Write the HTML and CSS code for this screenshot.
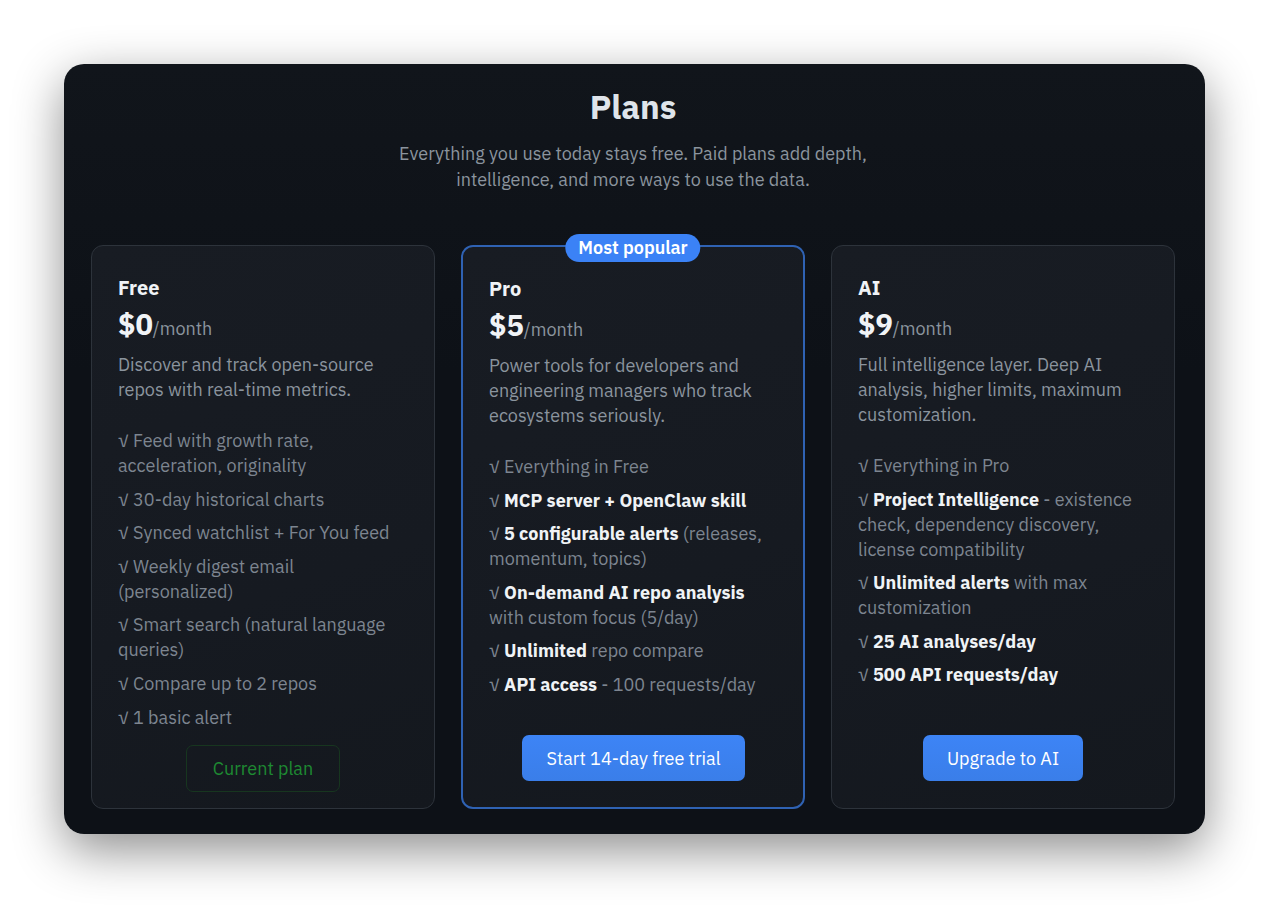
FILE: index.html
```html
<!DOCTYPE html>
<html lang="en">
<head>
    <meta charset="UTF-8">
    <meta name="viewport" content="width=device-width, initial-scale=1.0">
    <title>Plans</title>
    <link rel="stylesheet" href="styles.css">
</head>
<body>
    <div class="plans">
        <h1 class="plans-title">Plans</h1>
        <p class="plans-sub">Everything you use today stays free. Paid plans add depth,<br>intelligence, and more ways to use the data.</p>

        <div class="cards">
            <div class="card">
                <div class="card-name">Free</div>
                <div class="price"><span class="amount">$0</span>/month</div>
                <p class="desc">Discover and track open-source repos with real-time metrics.</p>
                <ul class="features">
                    <li>√ Feed with growth rate, acceleration, originality</li>
                    <li>√ 30-day historical charts</li>
                    <li>√ Synced watchlist + For You feed</li>
                    <li>√ Weekly digest email (personalized)</li>
                    <li>√ Smart search (natural language queries)</li>
                    <li>√ Compare up to 2 repos</li>
                    <li>√ 1 basic alert</li>
                </ul>
                <button class="btn current">Current plan</button>
            </div>

            <div class="card popular">
                <span class="badge">Most popular</span>
                <div class="card-name">Pro</div>
                <div class="price"><span class="amount">$5</span>/month</div>
                <p class="desc">Power tools for developers and engineering managers who track ecosystems seriously.</p>
                <ul class="features">
                    <li>√ Everything in Free</li>
                    <li>√ <b>MCP server + OpenClaw skill</b></li>
                    <li>√ <b>5 configurable alerts</b> (releases, momentum, topics)</li>
                    <li>√ <b>On-demand AI repo analysis</b> with custom focus (5/day)</li>
                    <li>√ <b>Unlimited</b> repo compare</li>
                    <li>√ <b>API access</b> - 100 requests/day</li>
                </ul>
                <button class="btn primary">Start 14-day free trial</button>
            </div>

            <div class="card">
                <div class="card-name">AI</div>
                <div class="price"><span class="amount">$9</span>/month</div>
                <p class="desc">Full intelligence layer. Deep AI analysis, higher limits, maximum customization.</p>
                <ul class="features">
                    <li>√ Everything in Pro</li>
                    <li>√ <b>Project Intelligence</b> - existence check, dependency discovery, license compatibility</li>
                    <li>√ <b>Unlimited alerts</b> with max customization</li>
                    <li>√ <b>25 AI analyses/day</b></li>
                    <li>√ <b>500 API requests/day</b></li>
                </ul>
                <button class="btn primary">Upgrade to AI</button>
            </div>
        </div>
    </div>
</body>
</html>
```

FILE: styles.css
```css
* {
    box-sizing: border-box;
}
body {
    margin: 0;
    padding: 64px 0 74px 64px;
    background: #ffffff;
    font-family: "IBM Plex Sans", Inter, "Noto Sans", sans-serif;
    color: #8b949e;
}
.plans {
    width: 1141px;
    height: 770px;
    padding: 22px 30px 0 27px;
    border-radius: 20px;
    background: linear-gradient(180deg, #11151b 0%, #0d1117 40%, #0d1117 100%);
    box-shadow: 0 16px 50px rgba(0, 0, 0, 0.45);
}
.plans-title {
    margin: 0;
    text-align: center;
    font-size: 33px;
    line-height: 42px;
    font-weight: 700;
    color: #dfe4ea;
}
.plans-sub {
    margin: 13px 0 0;
    text-align: center;
    font-size: 18px;
    line-height: 26px;
    color: #8b949e;
}
.cards {
    display: grid;
    grid-template-columns: repeat(3, 344px);
    gap: 26px;
    margin-top: 52px;
}
.card {
    position: relative;
    display: flex;
    flex-direction: column;
    height: 564px;
    padding: 28px 26px 16px 26px;
    border: 1px solid #2d333b;
    border-radius: 12px;
    background: linear-gradient(160deg, #181c23 0%, #161a21 60%, #14181e 100%);
}
.card.popular {
    border: 2px solid #2f62b3;
    padding: 28px 25px 15px 26px;
}
.badge {
    position: absolute;
    top: -13px;
    left: 50%;
    transform: translateX(-50%);
    padding: 0 13px;
    height: 28px;
    line-height: 28px;
    border-radius: 14px;
    background: #3b82f6;
    color: #ffffff;
    font-size: 18px;
    font-weight: 600;
    white-space: nowrap;
}
.card-name {
    font-size: 20px;
    line-height: 28px;
    font-weight: 700;
    color: #f0f3f6;
}
.price {
    margin-top: 4px;
    font-size: 18px;
    line-height: 36px;
    color: #8b949e;
}
.amount {
    font-size: 29px;
    font-weight: 700;
    color: #f0f3f6;
}
.desc {
    margin: 5px 0 0;
    font-size: 18px;
    line-height: 25px;
    color: #8b949e;
}
.features {
    list-style: none;
    margin: 26px 0 0;
    padding: 0;
    display: flex;
    flex-direction: column;
    gap: 8.6px;
    font-size: 18px;
    line-height: 25px;
    color: #7d8590;
}
.features b {
    font-weight: 700;
    color: #f0f3f6;
}
.btn {
    align-self: center;
    margin-top: auto;
    font-family: inherit;
    font-size: 18px;
    border-radius: 7px;
    cursor: pointer;
}
.current {
    height: 47px;
    padding: 0 26px;
    border: 1px solid #17361f;
    background: transparent;
    color: #1e8a32;
}
.primary {
    height: 46px;
    padding: 0 24px;
    margin-bottom: 11px;
    border: none;
    background: linear-gradient(180deg, #3d84f6, #3a7ee9);
    color: #ffffff;
}
```
